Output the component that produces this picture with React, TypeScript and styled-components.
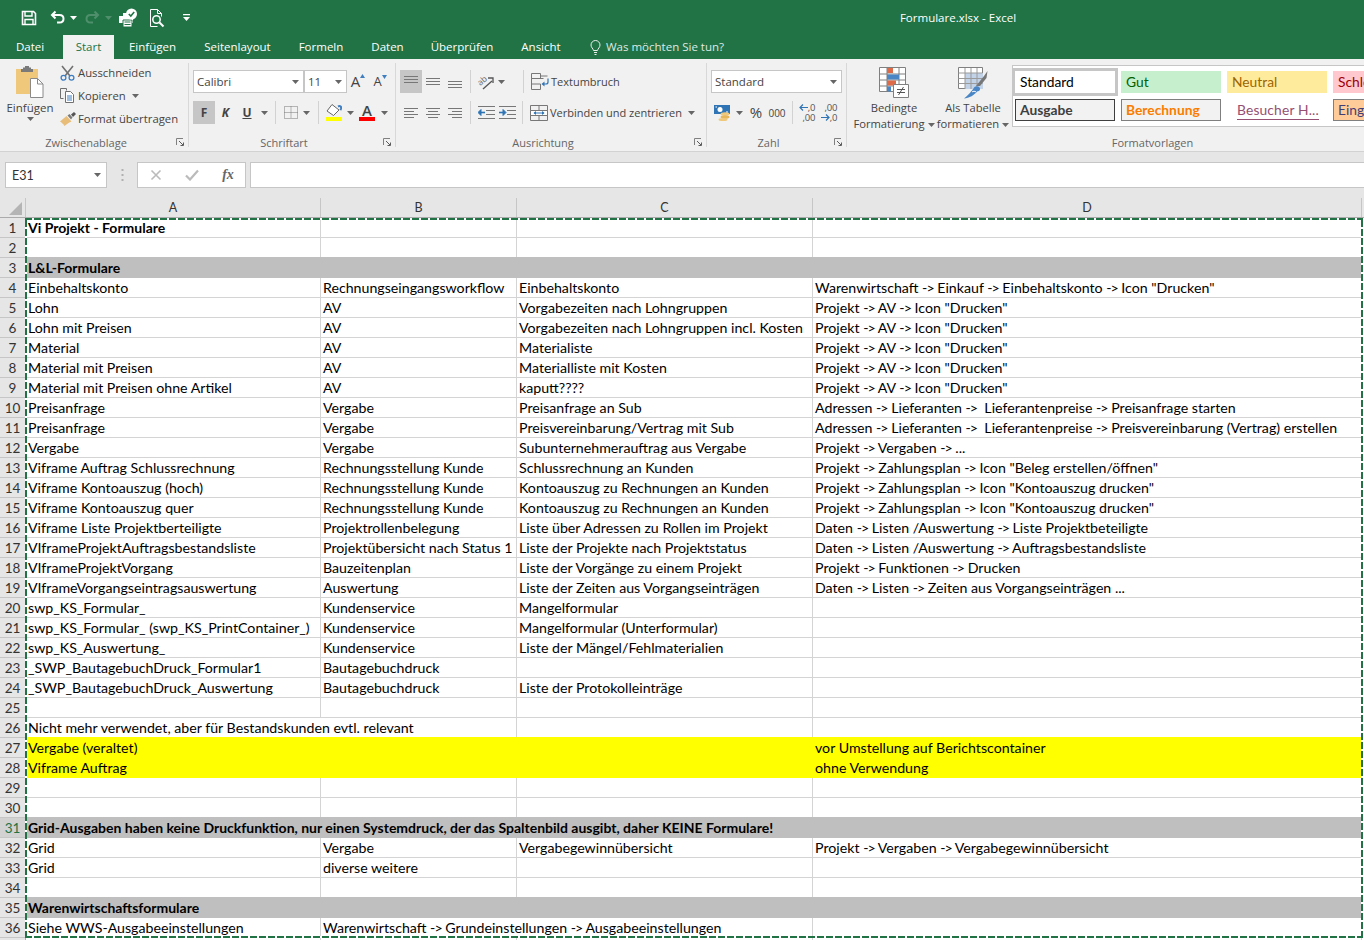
import React from 'react';
import styled, { createGlobalStyle } from 'styled-components';

const GlobalStyle = createGlobalStyle`
  html, body {
    margin: 0;
    padding: 0;
    background: #e6e6e6;
    overflow: hidden;
  }
  * {
    box-sizing: border-box;
  }
`;

const GREEN = '#217346';
const UI_FONT = '"Open Sans", "Noto Sans", sans-serif';
const CELL_FONT = 'Lato, "Open Sans", sans-serif';

const Page = styled.div`
  width: 1364px;
  height: 940px;
  overflow: hidden;
  position: relative;
  font-family: ${UI_FONT};
  color: #444;
`;

/* ---------- title bar and tabs ---------- */

const TitleBar = styled.div`
  height: 35px;
  background: ${GREEN};
  display: flex;
  align-items: center;
  padding-left: 20px;
`;

const QuickButton = styled.div<{ $w: number; $gap?: number }>`
  width: ${({ $w }) => $w}px;
  margin-left: ${({ $gap }) => $gap ?? 0}px;
  height: 30px;
  display: flex;
  align-items: center;
  justify-content: center;
  flex: none;
`;

const Mirrored = styled.span`
  display: flex;
  transform: scaleX(-1);
`;

const WindowTitle = styled.div`
  margin-left: 696px;
  width: 140px;
  text-align: center;
  color: #fff;
  font-size: 11.5px;
`;

const TabStrip = styled.div`
  height: 24px;
  background: ${GREEN};
  display: flex;
  padding-left: 4px;
`;

const Tab = styled.div<{ $w: number; $active?: boolean; $gap?: number }>`
  width: ${({ $w }) => $w}px;
  margin-right: ${({ $gap }) => $gap ?? 0}px;
  background: ${({ $active }) => ($active ? '#f1f1f1' : 'transparent')};
  color: ${({ $active }) => ($active ? GREEN : '#fff')};
  font-size: 11.5px;
  line-height: 24px;
  text-align: center;
  flex: none;
`;

const TellMe = styled.div`
  margin-left: 15px;
  display: flex;
  align-items: center;
  gap: 5px;
  color: #dfe9e3;
  font-size: 11.5px;
  line-height: 24px;
`;

/* ---------- ribbon ---------- */

const Ribbon = styled.div`
  height: 93px;
  background: #f1f1f1;
  border-bottom: 1px solid #d2d2d2;
  padding-top: 4px;
  display: flex;
`;

const Group = styled.div<{ $w: number; $last?: boolean }>`
  width: ${({ $w }) => $w}px;
  height: 84px;
  flex: none;
  display: flex;
  flex-direction: column;
  border-right: ${({ $last }) => ($last ? 'none' : '1px solid #d8d8d8')};
`;

const GroupBody = styled.div<{ $left?: number; $top?: number }>`
  flex: 1;
  min-height: 0;
  display: flex;
  padding-left: ${({ $left }) => $left ?? 0}px;
  padding-top: ${({ $top }) => $top ?? 0}px;
`;

const GroupLabelRow = styled.div<{ $pad?: number }>`
  height: 16px;
  margin-bottom: -3px;
  display: flex;
  align-items: center;
  padding-left: ${({ $pad }) => $pad ?? 0}px;
`;

const GroupLabel = styled.div`
  flex: 1;
  text-align: center;
  font-size: 11px;
  color: #666;
`;

const Launcher = styled.div`
  width: 16px;
  height: 16px;
  display: flex;
  align-items: center;
  justify-content: center;
`;

const Stack = styled.div<{ $gap?: number; $shift?: number }>`
  display: flex;
  flex-direction: column;
  gap: ${({ $gap }) => $gap ?? 0}px;
  margin-top: ${({ $shift }) => $shift ?? 0}px;
`;

const Row = styled.div`
  display: flex;
  align-items: center;
  height: 23px;
`;

const Tool = styled.div<{ $w: number; $active?: boolean }>`
  width: ${({ $w }) => $w}px;
  height: 23px;
  flex: none;
  display: flex;
  align-items: center;
  justify-content: center;
  background: ${({ $active }) => ($active ? '#c6c6c6' : 'transparent')};
  color: #444;
`;

const Sep = styled.div<{ $l: number; $r: number }>`
  width: 1px;
  height: 23px;
  flex: none;
  background: #d2d2d2;
  margin-left: ${({ $l }) => $l}px;
  margin-right: ${({ $r }) => $r}px;
`;

const PasteButton = styled.div`
  width: 60px;
  flex: none;
  display: flex;
  flex-direction: column;
  align-items: center;
  padding-top: 3px;
  font-size: 11.5px;
  color: #444;
`;

const PasteLabel = styled.div`
  margin-top: 1px;
  line-height: 18px;
`;

const SmallAction = styled.div`
  height: 23px;
  display: flex;
  align-items: center;
  font-size: 11.3px;
  color: #444;
  white-space: nowrap;
`;

const SmallIcon = styled.span`
  width: 18px;
  flex: none;
  display: flex;
`;

const Combo = styled.div<{ $w: number }>`
  width: ${({ $w }) => $w}px;
  height: 23px;
  flex: none;
  background: #fff;
  border: 1px solid #c6c6c6;
  display: flex;
  align-items: center;
  justify-content: space-between;
  padding: 0 4px 0 3px;
  font-size: 11.5px;
  color: #444;
`;

const FontLetter = styled.span<{ $size: number; $bold?: boolean; $italic?: boolean; $under?: boolean }>`
  font-size: ${({ $size }) => $size}px;
  font-weight: ${({ $bold }) => ($bold ? 700 : 400)};
  font-style: ${({ $italic }) => ($italic ? 'italic' : 'normal')};
  text-decoration: ${({ $under }) => ($under ? 'underline' : 'none')};
  color: #444;
  line-height: 1;
`;

const GrowMark = styled.div`
  display: flex;
  align-items: flex-start;
`;

const ColorLetter = styled.div`
  display: flex;
  flex-direction: column;
  align-items: center;
  font-size: 15px;
  line-height: 13px;
  font-weight: 600;
  color: #444;
`;

const ColorStrip = styled.div<{ $color: string }>`
  width: 16px;
  height: 4px;
  background: ${({ $color }) => $color};
`;

const DecimalStack = styled.div`
  display: flex;
  flex-direction: column;
  align-items: flex-end;
  font-size: 9.5px;
  line-height: 10px;
  letter-spacing: -0.2px;
  color: #555;
`;

const DecimalLine = styled.div`
  display: flex;
  align-items: center;
`;

const ActionLabel = styled.span`
  font-size: 11px;
  margin-left: 2px;
  color: #444;
  white-space: nowrap;
`;

const BigButton = styled.div<{ $w: number }>`
  width: ${({ $w }) => $w}px;
  flex: none;
  display: flex;
  flex-direction: column;
  align-items: center;
  padding-top: 4px;
`;

const BigLabel = styled.div<{ $lift?: number }>`
  margin-top: ${({ $lift }) => 2 - ($lift ?? 0)}px;
  text-align: center;
  font-size: 11.2px;
  line-height: 16px;
  color: #444;
  white-space: nowrap;
`;

const InlineCaret = styled.span`
  display: inline-flex;
  vertical-align: middle;
  margin-left: 3px;
`;

const Gallery = styled.div`
  width: 400px;
  height: 62px;
  margin-top: 2px;
  margin-left: 2px;
  flex: none;
  background: #fff;
  border: 1px solid #c6c6c6;
  padding: 5px 0 0 2px;
  display: grid;
  grid-template-columns: repeat(4, 106px);
  grid-auto-rows: 22px;
  row-gap: 6px;
`;

const StyleCell = styled.div<{
  $bg?: string;
  $fg?: string;
  $border?: string;
  $bold?: boolean;
  $selected?: boolean;
}>`
  width: 100px;
  height: 22px;
  font-family: ${CELL_FONT};
  font-size: 13.8px;
  line-height: 19px;
  padding-left: 4px;
  white-space: nowrap;
  background: ${({ $bg }) => $bg ?? 'transparent'};
  color: ${({ $fg }) => $fg ?? '#000'};
  border: 1px solid ${({ $border }) => $border ?? 'transparent'};
  font-weight: ${({ $bold }) => ($bold ? 700 : 400)};
  outline: ${({ $selected }) => ($selected ? '3px solid #c6c6c6' : 'none')};
`;

const LinkText = styled.span`
  display: inline-block;
  color: #954f72;
  border-bottom: 1px solid #954f72;
  line-height: 18px;
  margin-left: 5px;
  letter-spacing: 0.15px;
`;

/* ---------- formula bar ---------- */

const FormulaBar = styled.div`
  height: 46px;
  background: #e6e6e6;
  padding: 10px 0 10px 5px;
  display: flex;
  align-items: stretch;
`;

const NameBox = styled.div`
  width: 102px;
  flex: none;
  background: #fff;
  border: 1px solid #c6c6c6;
  display: flex;
  align-items: center;
  justify-content: space-between;
  padding: 0 5px 0 6px;
  font-family: ${CELL_FONT};
  font-size: 12.5px;
  color: #333;
`;

const Grip = styled.div`
  width: 30px;
  flex: none;
  display: flex;
  align-items: center;
  justify-content: center;
`;

const FxBox = styled.div`
  width: 109px;
  flex: none;
  background: #fff;
  border: 1px solid #c6c6c6;
  display: grid;
  grid-template-columns: repeat(3, 36px);
  align-items: center;
  justify-items: center;
`;

const FxLabel = styled.span`
  font-family: "Liberation Serif", serif;
  font-style: italic;
  font-weight: 700;
  font-size: 14px;
  color: #666;
`;

const FormulaInput = styled.div`
  flex: 1;
  margin-left: 4px;
  margin-right: -2px;
  background: #fff;
  border: 1px solid #c6c6c6;
`;

/* ---------- sheet ---------- */

const Sheet = styled.div`
  position: relative;
  background: #fff;
`;

const COLUMNS = '295px 196px 296px 549px';

const HeaderRow = styled.div`
  height: 20px;
  display: flex;
  background: #e6e6e6;
  border-bottom: 1px solid #ababab;
`;

const Corner = styled.div`
  width: 26px;
  flex: none;
  display: flex;
  align-items: flex-end;
  justify-content: flex-end;
  padding: 0 3px 2px 0;
  border-right: 1px solid #c6c6c6;
`;

const ColumnHeads = styled.div`
  display: grid;
  grid-template-columns: ${COLUMNS};
`;

const ColumnHead = styled.div`
  border-right: 1px solid #c6c6c6;
  text-align: center;
  font-family: ${CELL_FONT};
  font-size: 12.5px;
  line-height: 19px;
  color: #333;
`;

const SheetRow = styled.div`
  height: 20px;
  display: flex;
`;

const RowHead = styled.div<{ $current?: boolean }>`
  width: 26px;
  flex: none;
  background: ${({ $current }) => ($current ? '#d2d2d2' : '#e6e6e6')};
  border-right: 1px solid #ababab;
  border-bottom: 1px solid #c6c6c6;
  text-align: center;
  font-family: ${CELL_FONT};
  font-size: 13.5px;
  line-height: 20px;
  color: ${({ $current }) => ($current ? GREEN : '#333')};
`;

const RowCells = styled.div<{ $fill?: string }>`
  display: grid;
  grid-template-columns: ${COLUMNS};
  background: ${({ $fill }) => $fill ?? '#fff'};
  box-shadow: ${({ $fill }) => ($fill ? `0 -1px 0 ${$fill}` : 'none')};
`;

const Cell = styled.div<{ $span?: number; $bold?: boolean; $filled?: boolean }>`
  grid-column: span ${({ $span }) => $span ?? 1};
  padding-left: 2px;
  font-family: ${CELL_FONT};
  font-size: ${({ $bold }) => ($bold ? 14 : 14.2)}px;
  line-height: 20px;
  font-weight: ${({ $bold }) => ($bold ? 700 : 400)};
  color: #000;
  white-space: pre;
  overflow: hidden;
  border-right: 1px solid ${({ $filled }) => ($filled ? 'transparent' : '#d4d4d4')};
  border-bottom: 1px solid ${({ $filled }) => ($filled ? 'transparent' : '#d4d4d4')};
`;

const Arrow = styled.span`
  letter-spacing: -1px;
`;

const MarchingAnts = styled.div`
  position: absolute;
  left: 25px;
  top: 20px;
  width: 1338px;
  height: 720px;
  pointer-events: none;
  background-image:
    repeating-linear-gradient(90deg, ${GREEN} 0 7px, #fff 7px 9px),
    repeating-linear-gradient(90deg, ${GREEN} 0 7px, #fff 7px 9px),
    repeating-linear-gradient(0deg, ${GREEN} 0 7px, #fff 7px 9px),
    repeating-linear-gradient(0deg, ${GREEN} 0 7px, #fff 7px 9px);
  background-size: 100% 2px, 100% 2px, 2px 100%, 2px 100%;
  background-position: 0 0, 0 100%, 0 0, 100% 0;
  background-repeat: no-repeat;
`;

/* ---------- data ---------- */

type SheetCell = { text: string; span?: number };
type SheetLine = { cells: SheetCell[]; fill?: string; bold?: boolean };

const GREY = '#bfbfbf';
const YELLOW = '#ffff00';

const line = (a = '', b = '', c = '', d = ''): SheetLine => ({
  cells: [{ text: a }, { text: b }, { text: c }, { text: d }],
});

const band = (text: string): SheetLine => ({
  cells: [{ text, span: 4 }],
  fill: GREY,
  bold: true,
});

const AV = 'Projekt -> AV -> Icon "Drucken"';
const RK = 'Rechnungsstellung Kunde';

const sheetLines: SheetLine[] = [
  { cells: [{ text: 'Vi Projekt - Formulare' }, { text: '' }, { text: '' }, { text: '' }], bold: true },
  line(),
  band('L&L-Formulare'),
  line('Einbehaltskonto', 'Rechnungseingangsworkflow', 'Einbehaltskonto', 'Warenwirtschaft -> Einkauf -> Einbehaltskonto -> Icon "Drucken"'),
  line('Lohn', 'AV', 'Vorgabezeiten nach Lohngruppen', AV),
  line('Lohn mit Preisen', 'AV', 'Vorgabezeiten nach Lohngruppen incl. Kosten', AV),
  line('Material', 'AV', 'Materialiste', AV),
  line('Material mit Preisen', 'AV', 'Materialliste mit Kosten', AV),
  line('Material mit Preisen ohne Artikel', 'AV', 'kaputt????', AV),
  line('Preisanfrage', 'Vergabe', 'Preisanfrage an Sub', 'Adressen -> Lieferanten ->  Lieferantenpreise -> Preisanfrage starten'),
  line('Preisanfrage', 'Vergabe', 'Preisvereinbarung/Vertrag mit Sub', 'Adressen -> Lieferanten ->  Lieferantenpreise -> Preisvereinbarung (Vertrag) erstellen'),
  line('Vergabe', 'Vergabe', 'Subunternehmerauftrag aus Vergabe', 'Projekt -> Vergaben -> ...'),
  line('Viframe Auftrag Schlussrechnung', RK, 'Schlussrechnung an Kunden', 'Projekt -> Zahlungsplan -> Icon "Beleg erstellen/öffnen"'),
  line('Viframe Kontoauszug (hoch)', RK, 'Kontoauszug zu Rechnungen an Kunden', 'Projekt -> Zahlungsplan -> Icon "Kontoauszug drucken"'),
  line('Viframe Kontoauszug quer', RK, 'Kontoauszug zu Rechnungen an Kunden', 'Projekt -> Zahlungsplan -> Icon "Kontoauszug drucken"'),
  line('Viframe Liste Projektberteiligte', 'Projektrollenbelegung', 'Liste über Adressen zu Rollen im Projekt', 'Daten -> Listen /Auswertung -> Liste Projektbeteiligte'),
  line('VIframeProjektAuftragsbestandsliste', 'Projektübersicht nach Status 1', 'Liste der Projekte nach Projektstatus', 'Daten -> Listen /Auswertung -> Auftragsbestandsliste'),
  line('VIframeProjektVorgang', 'Bauzeitenplan', 'Liste der Vorgänge zu einem Projekt', 'Projekt -> Funktionen -> Drucken'),
  line('VIframeVorgangseintragsauswertung', 'Auswertung', 'Liste der Zeiten aus Vorgangseinträgen', 'Daten -> Listen -> Zeiten aus Vorgangseinträgen ...'),
  line('swp_KS_Formular_', 'Kundenservice', 'Mangelformular'),
  line('swp_KS_Formular_ (swp_KS_PrintContainer_)', 'Kundenservice', 'Mangelformular (Unterformular)'),
  line('swp_KS_Auswertung_', 'Kundenservice', 'Liste der Mängel/Fehlmaterialien'),
  line('_SWP_BautagebuchDruck_Formular1', 'Bautagebuchdruck'),
  line('_SWP_BautagebuchDruck_Auswertung', 'Bautagebuchdruck', 'Liste der Protokolleinträge'),
  line(),
  { cells: [{ text: 'Nicht mehr verwendet, aber für Bestandskunden evtl. relevant', span: 2 }, { text: '' }, { text: '' }] },
  { cells: [{ text: 'Vergabe (veraltet)', span: 3 }, { text: 'vor Umstellung auf Berichtscontainer' }], fill: YELLOW },
  { cells: [{ text: 'Viframe Auftrag', span: 3 }, { text: 'ohne Verwendung' }], fill: YELLOW },
  line(),
  line(),
  band('Grid-Ausgaben haben keine Druckfunktion, nur einen Systemdruck, der das Spaltenbild ausgibt, daher KEINE Formulare!'),
  line('Grid', 'Vergabe', 'Vergabegewinnübersicht', 'Projekt -> Vergaben -> Vergabegewinnübersicht'),
  line('Grid', 'diverse weitere'),
  line(),
  band('Warenwirtschaftsformulare'),
  { cells: [{ text: 'Siehe WWS-Ausgabeeinstellungen' }, { text: 'Warenwirtschaft -> Grundeinstellungen -> Ausgabeeinstellungen', span: 2 }, { text: '' }] },
  line(),
];

// Calibri draws "->" much narrower than Lato does
const withArrows = (text: string) =>
  text.split('->').map((part, i) => (
    <React.Fragment key={i}>
      {i > 0 && <Arrow>{'->'}</Arrow>}
      {part}
    </React.Fragment>
  ));

/* ---------- icons ---------- */

const Caret = ({ color = '#666' }: { color?: string }) => (
  <svg width="7" height="4" viewBox="0 0 7 4">
    <path d="M0 0h7L3.5 4z" fill={color} />
  </svg>
);

const SaveIcon = () => (
  <svg width="16" height="16" viewBox="0 0 16 16" fill="none" stroke="#fff">
    <path d="M1.5 1.5h11l2 2v11h-13z" strokeWidth="1.6" />
    <path d="M4 2v4h7V2" strokeWidth="1.4" />
    <path d="M4 14.5V9.5h8v5" strokeWidth="1.4" />
  </svg>
);

const UndoIcon = ({ color }: { color: string }) => (
  <svg width="16" height="15" viewBox="0 0 16 15" fill="none" stroke={color} strokeWidth="2">
    <path d="M5.5 1.5 2 5l3.5 3.5" />
    <path d="M2.5 5h7c2.6 0 4 1.6 4 3.7 0 2.2-1.5 3.8-4 3.8H7" />
  </svg>
);

const PrintCheckIcon = () => (
  <svg width="20" height="20" viewBox="0 0 20 20">
    <path d="M5 5h6v4H5z" fill="#fff" />
    <path d="M1 8h14v7H1z" fill="#fff" />
    <path d="M5 12h9v7H5z" fill="#fff" stroke={GREEN} />
    <path d="M6.5 14h6M6.5 16.5h6" stroke={GREEN} />
    <circle cx="13.5" cy="6" r="5.5" fill="#fff" />
    <path d="m10.8 6 2 2 3.4-4" fill="none" stroke={GREEN} strokeWidth="1.6" />
  </svg>
);

const PreviewIcon = () => (
  <svg width="16" height="20" viewBox="0 0 16 20" fill="none" stroke="#fff">
    <path d="M1.5 18.5v-17h7l4 4v3" />
    <path d="M8.5 1.5v4h4" />
    <path d="M1.5 18.5h7" />
    <circle cx="7.5" cy="11.5" r="3.7" strokeWidth="1.5" />
    <path d="m10.5 14.5 4 4" strokeWidth="2" />
  </svg>
);

const CustomizeIcon = () => (
  <svg width="7" height="8" viewBox="0 0 7 8">
    <path d="M0 0h7v1.3H0zM0 3h7L3.5 7z" fill="#fff" />
  </svg>
);

const BulbIcon = () => (
  <svg width="11" height="15" viewBox="0 0 11 15" fill="none" stroke="#e8efe9">
    <path d="M3.5 10.5C3.2 8.5 1 7.6 1 5a4.5 4.5 0 0 1 9 0c0 2.6-2.2 3.5-2.5 5.5z" />
    <path d="M4 12.5h3M4.5 14.5h2" />
  </svg>
);

const PasteIcon = () => (
  <svg width="30" height="32" viewBox="0 0 30 32">
    <path d="M1 3h22v25H1z" fill="#f0c87c" />
    <path d="M8 3V1.5h2V0h4v1.5h2V3h2v3H6V3z" fill="#7a7a7a" />
    <path d="M15.5 12.5h7l5.5 5.5v13.5H15.5z" fill="#fff" stroke="#8a8a8a" />
    <path d="M22.5 12.5V18H28" fill="none" stroke="#8a8a8a" />
  </svg>
);

const CutIcon = () => (
  <svg width="15" height="16" viewBox="0 0 15 16" fill="none">
    <path d="M2 1l8 10M13 1 5 11" stroke="#707070" strokeWidth="1.6" />
    <circle cx="3.5" cy="12.8" r="2.4" stroke="#3f7ec0" strokeWidth="1.3" />
    <circle cx="11.5" cy="12.8" r="2.4" stroke="#3f7ec0" strokeWidth="1.3" />
  </svg>
);

const CopyIcon = () => (
  <svg width="15" height="15" viewBox="0 0 15 15" fill="none" stroke="#707070">
    <path d="M.5.5h6v2M.5.5v10h3" />
    <path d="M5.5 3.5h5l3 3v8h-8z" fill="#fff" />
    <path d="M7 8h5M7 10h5M7 12h5" stroke="#3f7ec0" />
  </svg>
);

const BrushIcon = () => (
  <svg width="16" height="14" viewBox="0 0 16 14">
    <path d="M0 9.5 6.5 4l5 5.5c-3 1-5.5 3.5-7 4.5-1-2-3-3.5-4.5-4.5z" fill="#e7bd79" />
    <path d="m7.5 3.5 2-1.5 3 3.5L11 7.5z" fill="#7a7a7a" />
    <path d="M11 2.5 14 0l2 2-3 3z" fill="#555" />
  </svg>
);

const LauncherIcon = () => (
  <svg width="8" height="8" viewBox="0 0 8 8" fill="none" stroke="#808080">
    <path d="M.5 7V.5H7" />
    <path d="M3 3l4 4M4.5 7.5h3v-3" stroke="#5b5b5b" />
  </svg>
);

const GrowFontIcon = ({ grow }: { grow: boolean }) => (
  <GrowMark>
    <FontLetter $size={grow ? 15 : 13}>A</FontLetter>
    <svg width="5" height="4" viewBox="0 0 5 4">
      <path d={grow ? 'M0 4h5L2.5 0z' : 'M0 0h5L2.5 4z'} fill="#3f7ec0" />
    </svg>
  </GrowMark>
);

const BorderIcon = () => (
  <svg width="14" height="13" viewBox="0 0 14 13" fill="none" stroke="#777" strokeDasharray="1 1">
    <path d="M.5.5h13v12H.5zM7 .5v12M.5 6.5h13" />
  </svg>
);

const FillIcon = () => (
  <svg width="16" height="13" viewBox="0 0 16 13" fill="none">
    <path d="M6 .5 13 6l-5.5 5.5L1 7z" stroke="#666" fill="#fff" />
    <path d="M12 2.5c2-1 3.5 0 3 2l-.5 1.8" stroke="#3f7ec0" strokeWidth="2" />
  </svg>
);

const AlignVertical = ({ y }: { y: number }) => (
  <svg width="16" height="16" viewBox="0 0 16 16" stroke="#777">
    <path d={`M1 ${y}.5h14M1 ${y + 3}.5h14M1 ${y + 6}.5h14`} />
  </svg>
);

const AlignHorizontal = ({ mode }: { mode: 'left' | 'center' | 'right' }) => {
  const short = mode === 'left' ? 'M1 5.5h10M1 11.5h10' : mode === 'center' ? 'M3 5.5h10M3 11.5h10' : 'M5 5.5h10M5 11.5h10';
  return (
    <svg width="16" height="14" viewBox="0 0 16 14" stroke="#777">
      <path d={`M1 2.5h14M1 8.5h14 ${short}`} />
    </svg>
  );
};

const OrientationIcon = () => (
  <svg width="18" height="18" viewBox="0 0 18 18" fill="none" overflow="visible">
    <text x="1" y="11" fontFamily="Open Sans, sans-serif" fontSize="8.5" fill="#666" transform="rotate(-40 5 9)">ab</text>
    <path d="m6 16 9-8" stroke="#555" strokeWidth="1.3" />
    <path d="M11 5h5v5" stroke="#555" strokeWidth="1.3" />
  </svg>
);

const IndentIcon = ({ increase }: { increase: boolean }) => (
  <svg width="17" height="14" viewBox="0 0 17 14" fill="none">
    <path d="M0 .5h17M8 4.5h9M8 8.5h9M0 12.5h17" stroke="#777" />
    <path d={increase ? 'M0 6.5h5' : 'M2 6.5h5'} stroke="#2f75b5" strokeWidth="1.6" />
    <path d={increase ? 'M4 3.5l3 3-3 3z' : 'M3 3.5l-3 3 3 3z'} fill="#2f75b5" stroke="#2f75b5" />
  </svg>
);

const WrapIcon = () => (
  <svg width="18" height="17" viewBox="0 0 18 17" fill="none">
    <path d="M.5.5h9v5h-9zM.5 5.5h12M.5 5.5v11h9V11H.5" stroke="#777" />
    <path d="M9.5 3h7" stroke="#777" />
    <path d="M17 5.5V9c0 1.5-1 2-2 2h-3" stroke="#2f75b5" strokeWidth="1.2" />
    <path d="m13.5 8.5-3 2.5 3 2.5z" fill="#2f75b5" />
  </svg>
);

const MergeIcon = () => (
  <svg width="18" height="16" viewBox="0 0 18 16" fill="none">
    <path d="M.5.5h17v15H.5zM9 .5v5M9 10.5v5" stroke="#777" />
    <path d="M.5 5.5h17v5H.5z" fill="#fff" stroke="#777" />
    <path d="M4 8h10" stroke="#2f75b5" />
    <path d="M6 6 3.5 8 6 10zM12 6l2.5 2-2.5 2z" fill="#2f75b5" />
  </svg>
);

const CurrencyIcon = () => (
  <svg width="16" height="16" viewBox="0 0 16 16">
    <path d="M0 0h16v9H0z" fill="#2f75b5" />
    <circle cx="6" cy="4.5" r="2.5" fill="#fff" />
    <path d="M1.5 2H3M12 7h2" stroke="#fff" />
    <ellipse cx="11" cy="9" rx="4.5" ry="1.8" fill="#f0c87c" />
    <ellipse cx="11" cy="12" rx="4.5" ry="1.8" fill="#e7b55a" />
    <ellipse cx="9" cy="14.5" rx="4.5" ry="1.5" fill="#f0c87c" />
  </svg>
);

const LeftArrow = () => (
  <svg width="9" height="7" viewBox="0 0 9 7" fill="none" stroke="#2f75b5" strokeWidth="1.2">
    <path d="M1 3.5h8M4 .5l-3 3 3 3" />
  </svg>
);

const RightArrow = () => (
  <svg width="9" height="7" viewBox="0 0 9 7" fill="none" stroke="#2f75b5" strokeWidth="1.2">
    <path d="M0 3.5h8M5 .5l3 3-3 3" />
  </svg>
);

const ConditionalIcon = () => (
  <svg width="30" height="31" viewBox="0 0 30 31" fill="none">
    <path d="M.5.5h26v24H.5z" fill="#fff" stroke="#808080" />
    <path d="M.5 7h26M.5 13h26M.5 19h26M8 1v24M20 1v24" stroke="#808080" />
    <path d="M8 1h6v5H8z" fill="#dd6b4a" />
    <path d="M8 7.5h12v5H8z" fill="#4a86c5" />
    <path d="M8 13.5h9v5H8z" fill="#dd6b4a" />
    <path d="M8 19.5h4v5H8z" fill="#4a86c5" />
    <path d="M14.5 17.5h15v13h-15z" fill="#fff" stroke="#808080" />
    <path d="M18 22.5h8M18 25.5h8M24.5 20l-5 8" stroke="#555" />
  </svg>
);

const TableStyleIcon = () => (
  <svg width="30" height="33" viewBox="0 0 30 33" fill="none">
    <path d="M.5.5h24v21H.5z" fill="#fff" stroke="#808080" />
    <path d="M7 6h18v16H7z" fill="#c2d3e8" />
    <path d="M.5 6h24M.5 11.5h24M.5 16.5h24M7 1v21M13 1v21M19 1v21" stroke="#9a9a9a" />
    <path d="m18 19 8-10 3.5-5-1 7-6.5 8z" fill="#777" />
    <path d="M16.5 20c2-1.5 5-.5 5.5 1.5.5 2-1.5 3-3 3-2 3-8 7-13 7 4-3 7.5-7 10.500-11.500z" fill="#4a86c5" />
    <path d="M14 25c1-1 3-1 4 0" stroke="#fff" />
  </svg>
);

const Triangle = () => (
  <svg width="13" height="13" viewBox="0 0 13 13">
    <path d="M13 0v13H0z" fill="#b4b4b4" />
  </svg>
);

const CrossIcon = () => (
  <svg width="12" height="12" viewBox="0 0 12 12" stroke="#bbb" strokeWidth="1.6">
    <path d="m1.5 1.5 9 9M10.5 1.5l-9 9" />
  </svg>
);

const CheckIcon = () => (
  <svg width="14" height="12" viewBox="0 0 14 12" fill="none" stroke="#bbb" strokeWidth="2.2">
    <path d="m1 6.5 4 4 8-9" />
  </svg>
);

const GripIcon = () => (
  <svg width="3" height="12" viewBox="0 0 3 12" fill="#b0b0b0">
    <path d="M.5 0h2v2h-2zM.5 5h2v2h-2zM.5 10h2v2h-2z" />
  </svg>
);

const GroupFooter = ({ label, launcher = true, pad }: { label: string; launcher?: boolean; pad?: number }) => (
  <GroupLabelRow $pad={pad}>
    <GroupLabel>{label}</GroupLabel>
    {launcher && (
      <Launcher>
        <LauncherIcon />
      </Launcher>
    )}
  </GroupLabelRow>
);

const App = () => (
  <Page>
    <GlobalStyle />
    <TitleBar>
      <QuickButton $w={18}><SaveIcon /></QuickButton>
      <QuickButton $w={16} $gap={12}><UndoIcon color="#fff" /></QuickButton>
      <QuickButton $w={12} $gap={1}><Caret color="#fff" /></QuickButton>
      <QuickButton $w={16} $gap={5}><Mirrored><UndoIcon color="#4f8f6b" /></Mirrored></QuickButton>
      <QuickButton $w={12} $gap={2}><Caret color="#4f8f6b" /></QuickButton>
      <QuickButton $w={20} $gap={4}><PrintCheckIcon /></QuickButton>
      <QuickButton $w={16} $gap={11}><PreviewIcon /></QuickButton>
      <QuickButton $w={12} $gap={15}><CustomizeIcon /></QuickButton>
      <WindowTitle>Formulare.xlsx - Excel</WindowTitle>
    </TitleBar>
    <TabStrip>
      <Tab $w={52} $gap={7}>Datei</Tab>
      <Tab $w={51} $active>Start</Tab>
      <Tab $w={77}>Einfügen</Tab>
      <Tab $w={93}>Seitenlayout</Tab>
      <Tab $w={74}>Formeln</Tab>
      <Tab $w={59}>Daten</Tab>
      <Tab $w={90}>Überprüfen</Tab>
      <Tab $w={68}>Ansicht</Tab>
      <TellMe><BulbIcon />Was möchten Sie tun?</TellMe>
    </TabStrip>

    <Ribbon>
      <Group $w={189}>
        <GroupBody>
          <PasteButton>
            <PasteIcon />
            <PasteLabel>Einfügen</PasteLabel>
            <Caret />
          </PasteButton>
          <Stack $shift={-2}>
            <SmallAction><SmallIcon><CutIcon /></SmallIcon>Ausschneiden</SmallAction>
            <SmallAction><SmallIcon><CopyIcon /></SmallIcon>Kopieren<Tool $w={20}><Caret /></Tool></SmallAction>
            <SmallAction><SmallIcon><BrushIcon /></SmallIcon>Format übertragen</SmallAction>
          </Stack>
        </GroupBody>
        <GroupFooter label="Zwischenablage" />
      </Group>

      <Group $w={207}>
        <GroupBody $left={4} $top={7}>
          <Stack $gap={8}>
            <Row>
              <Combo $w={111}>Calibri<Caret /></Combo>
              <Combo $w={43}>11<Caret /></Combo>
              <Tool $w={22}><GrowFontIcon grow /></Tool>
              <Tool $w={22}><GrowFontIcon grow={false} /></Tool>
            </Row>
            <Row>
              <Tool $w={22} $active><FontLetter $size={12} $bold>F</FontLetter></Tool>
              <Tool $w={21}><FontLetter $size={12} $bold $italic>K</FontLetter></Tool>
              <Tool $w={22}><FontLetter $size={12} $bold $under>U</FontLetter></Tool>
              <Tool $w={12}><Caret /></Tool>
              <Sep $l={5} $r={5} />
              <Tool $w={19}><BorderIcon /></Tool>
              <Tool $w={13}><Caret /></Tool>
              <Sep $l={5} $r={5} />
              <Tool $w={20}>
                <ColorLetter><FillIcon /><ColorStrip $color="#ffff00" /></ColorLetter>
              </Tool>
              <Tool $w={12}><Caret /></Tool>
              <Tool $w={22}>
                <ColorLetter>A<ColorStrip $color="#ff0000" /></ColorLetter>
              </Tool>
              <Tool $w={12}><Caret /></Tool>
            </Row>
          </Stack>
        </GroupBody>
        <GroupFooter label="Schriftart" />
      </Group>

      <Group $w={311}>
        <GroupBody $left={4} $top={7}>
          <Stack $gap={8}>
            <Row>
              <Tool $w={22} $active><AlignVertical y={2} /></Tool>
              <Tool $w={22}><AlignVertical y={4} /></Tool>
              <Tool $w={22}><AlignVertical y={7} /></Tool>
              <Sep $l={4} $r={5} />
              <Tool $w={20}><OrientationIcon /></Tool>
              <Tool $w={10}><Caret /></Tool>
              <Sep $l={17} $r={6} />
              <Tool $w={19}><WrapIcon /></Tool>
              <ActionLabel>Textumbruch</ActionLabel>
            </Row>
            <Row>
              <Tool $w={22}><AlignHorizontal mode="left" /></Tool>
              <Tool $w={22}><AlignHorizontal mode="center" /></Tool>
              <Tool $w={22}><AlignHorizontal mode="right" /></Tool>
              <Sep $l={4} $r={5} />
              <Tool $w={21}><IndentIcon increase={false} /></Tool>
              <Tool $w={21}><IndentIcon increase /></Tool>
              <Sep $l={4} $r={6} />
              <Tool $w={19}><MergeIcon /></Tool>
              <ActionLabel>Verbinden und zentrieren</ActionLabel>
              <Tool $w={20}><Caret /></Tool>
            </Row>
          </Stack>
        </GroupBody>
        <GroupFooter label="Ausrichtung" />
      </Group>

      <Group $w={140}>
        <GroupBody $left={4} $top={7}>
          <Stack $gap={8}>
            <Row>
              <Combo $w={131}>Standard<Caret /></Combo>
            </Row>
            <Row>
              <Tool $w={22}><CurrencyIcon /></Tool>
              <Tool $w={12}><Caret /></Tool>
              <Tool $w={22}><FontLetter $size={15}>%</FontLetter></Tool>
              <Tool $w={20}><FontLetter $size={10}>000</FontLetter></Tool>
              <Sep $l={5} $r={3} />
              <Tool $w={22}>
                <DecimalStack>
                  <DecimalLine><LeftArrow />,0</DecimalLine>
                  <DecimalLine>,00</DecimalLine>
                </DecimalStack>
              </Tool>
              <Tool $w={22}>
                <DecimalStack>
                  <DecimalLine>,00</DecimalLine>
                  <DecimalLine><RightArrow />,0</DecimalLine>
                </DecimalStack>
              </Tool>
            </Row>
          </Stack>
        </GroupBody>
        <GroupFooter label="Zahl" />
      </Group>

      <Group $w={517} $last>
        <GroupBody $left={5}>
          <BigButton $w={84}>
            <ConditionalIcon />
            <BigLabel>Bedingte<br />Formatierung<InlineCaret><Caret /></InlineCaret></BigLabel>
          </BigButton>
          <BigButton $w={74}>
            <TableStyleIcon />
            <BigLabel $lift={2}>Als Tabelle<br />formatieren<InlineCaret><Caret /></InlineCaret></BigLabel>
          </BigButton>
          <Gallery>
            <StyleCell $selected>Standard</StyleCell>
            <StyleCell $bg="#c6efce" $fg="#006100">Gut</StyleCell>
            <StyleCell $bg="#ffeb9c" $fg="#9c6500">Neutral</StyleCell>
            <StyleCell $bg="#ffc7ce" $fg="#9c0006">Schlecht</StyleCell>
            <StyleCell $bg="#f2f2f2" $fg="#3f3f3f" $border="#3f3f3f" $bold>Ausgabe</StyleCell>
            <StyleCell $bg="#f2f2f2" $fg="#fa7d00" $border="#7f7f7f" $bold>Berechnung</StyleCell>
            <StyleCell><LinkText>Besucher H...</LinkText></StyleCell>
            <StyleCell $bg="#ffcc99" $fg="#3f3f76" $border="#7f7f7f">Eingabe</StyleCell>
          </Gallery>
        </GroupBody>
        <GroupFooter label="Formatvorlagen" launcher={false} pad={94} />
      </Group>
    </Ribbon>

    <FormulaBar>
      <NameBox>E31<Caret /></NameBox>
      <Grip><GripIcon /></Grip>
      <FxBox>
        <CrossIcon />
        <CheckIcon />
        <FxLabel>fx</FxLabel>
      </FxBox>
      <FormulaInput />
    </FormulaBar>

    <Sheet>
      <HeaderRow>
        <Corner><Triangle /></Corner>
        <ColumnHeads>
          {['A', 'B', 'C', 'D'].map((name) => (
            <ColumnHead key={name}>{name}</ColumnHead>
          ))}
        </ColumnHeads>
      </HeaderRow>
      {sheetLines.map((row, index) => (
        <SheetRow key={index}>
          <RowHead $current={index === 30}>{index + 1}</RowHead>
          <RowCells $fill={row.fill}>
            {row.cells.map((cell, cellIndex) => (
              <Cell key={cellIndex} $span={cell.span} $bold={row.bold} $filled={!!row.fill}>
                {withArrows(cell.text)}
              </Cell>
            ))}
          </RowCells>
        </SheetRow>
      ))}
      <MarchingAnts />
    </Sheet>
  </Page>
);

export default App;
